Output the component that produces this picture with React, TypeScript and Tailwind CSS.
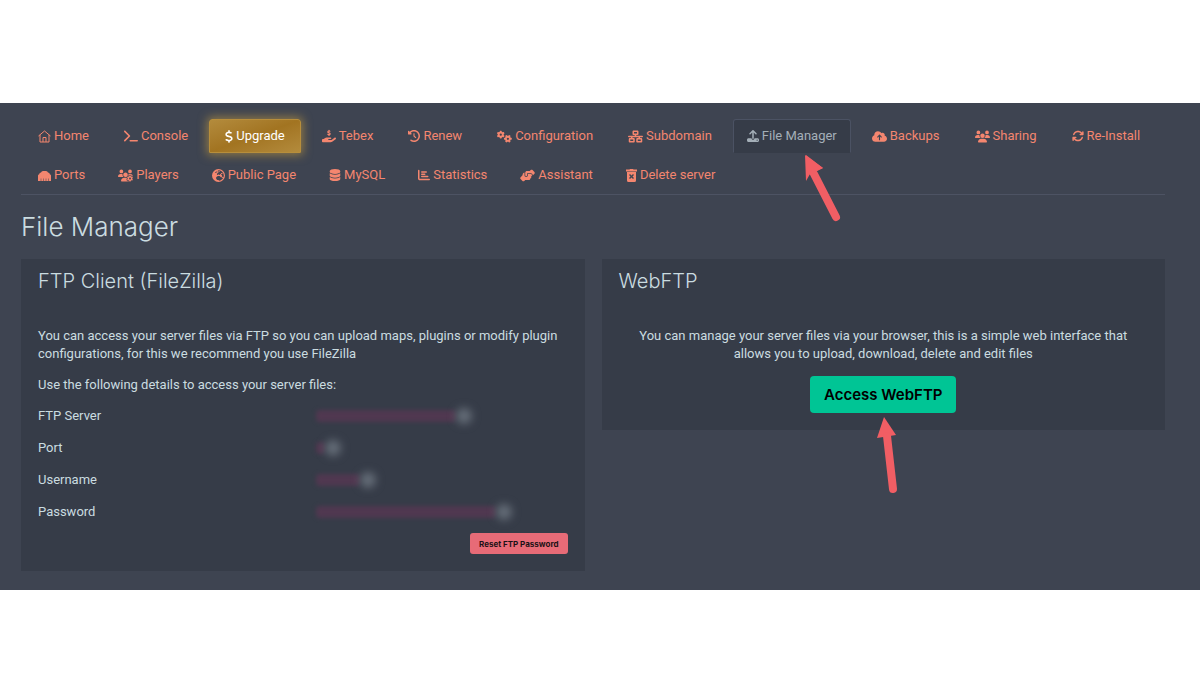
import type { ReactNode } from "react";
import {
  FaTerminal, FaDollarSign, FaHandHoldingDollar, FaClockRotateLeft, FaGears, FaNetworkWired,
  FaUpload, FaCloudArrowUp, FaUsers, FaArrowsRotate, FaUsersGear, FaEarthEurope,
  FaDatabase, FaChartBar, FaHandshakeAngle,
} from "react-icons/fa6";

function HomeIcon() {
  return (
    <svg viewBox="0 0 26 26" width="13" height="13" fill="none" stroke="currentColor" strokeWidth="2" strokeLinejoin="round" aria-hidden="true">
      <path d="M1 12 13 2l12 10M4 10v14h18V10M10 24v-9h6v9" />
    </svg>
  );
}

function PortsIcon() {
  return (
    <svg viewBox="0 0 26 22" width="13" height="11" fill="currentColor" aria-hidden="true">
      <path d="M0 22V11q0-2 2-2 1-4 4-4 1-3 4-3h6q3 0 4 3 3 0 4 4 2 0 2 2v11z" />
      <path d="M6 17v5M11 17v5M16 17v5M21 17v5" stroke="#3e4451" strokeWidth="1" />
    </svg>
  );
}

function TrashIcon() {
  return (
    <svg viewBox="0 0 22 26" width="11" height="13" fill="currentColor" aria-hidden="true">
      <path fillRule="evenodd" d="M0 1h7l1-1h6l1 1h7v4H0zM2 6h18v17q0 3-3 3H5q-3 0-3-3zM6 12l3 3-3 3 2 2 3-3 3 3 2-2-3-3 3-3-2-2-3 3-3-3z" />
    </svg>
  );
}

type Tab = { label: string; icon: ReactNode; kind?: "upgrade" | "active" };

const serverTabs: Tab[] = [
  { label: "Home", icon: <HomeIcon /> },
  { label: "Console", icon: <FaTerminal size={14} /> },
  { label: "Upgrade", icon: <FaDollarSign size={13} className="w-2" />, kind: "upgrade" },
  { label: "Tebex", icon: <FaHandHoldingDollar size={14} /> },
  { label: "Renew", icon: <FaClockRotateLeft size={12} /> },
  { label: "Configuration", icon: <FaGears size={15} /> },
  { label: "Subdomain", icon: <FaNetworkWired size={15} /> },
  { label: "File Manager", icon: <FaUpload size={12} />, kind: "active" },
  { label: "Backups", icon: <FaCloudArrowUp size={15} /> },
  { label: "Sharing", icon: <FaUsers size={15} /> },
  { label: "Re-Install", icon: <FaArrowsRotate size={12} /> },
];

const extraTabs: Tab[] = [
  { label: "Ports", icon: <PortsIcon /> },
  { label: "Players", icon: <FaUsersGear size={15} /> },
  { label: "Public Page", icon: <FaEarthEurope size={13} /> },
  { label: "MySQL", icon: <FaDatabase size={12} /> },
  { label: "Statistics", icon: <FaChartBar size={12} /> },
  { label: "Assistant", icon: <FaHandshakeAngle size={15} /> },
  { label: "Delete server", icon: <TrashIcon /> },
];

const tabStyle = {
  plain: "px-[13px] border-transparent text-[#f4866f]",
  upgrade:
    "px-[15px] border-[#b78e3b] bg-linear-to-br from-[#b38b3c] via-[#a27421] to-[#b38b3c] text-white shadow-[0_0_10px_2px_rgba(214,165,60,0.55)]",
  active: "px-[13px] border-[#4b5263] border-b-[#363c48] bg-[#363c48] text-[#a4afb8]",
};

function TabRow({ tabs, gap }: { tabs: Tab[]; gap: string }) {
  return (
    <div className={`flex flex-wrap px-[3px] ${gap}`}>
      {tabs.map((t) => (
        <a
          key={t.label}
          href="#"
          className={`flex h-[34px] items-center gap-[3px] rounded-t-[3px] border whitespace-nowrap ${tabStyle[t.kind ?? "plain"]}`}
        >
          {t.icon}
          {t.label}
        </a>
      ))}
    </div>
  );
}

const details = [
  { label: "FTP Server", width: "w-[140px]" },
  { label: "Port", width: "w-[9px]" },
  { label: "Username", width: "w-[44px]" },
  { label: "Password", width: "w-[180px]" },
];

export default function App() {
  return (
    <div className="min-h-screen bg-white py-[103px] font-['Roboto',sans-serif]">
      <main className="bg-[#3e4451] pt-4 pr-[35px] pb-[19px] pl-[21px] text-[13px] leading-[18px] text-[#cbdce0]">
        <nav className="flex flex-col gap-[5px] border-b border-[#4d5363] pb-[2px]">
          <TabRow tabs={serverTabs} gap="gap-x-[7px]" />
          <TabRow tabs={extraTabs} gap="gap-x-[5px]" />
        </nav>

        <h1 className="mt-4 mb-4 font-['Inter',sans-serif] text-[26px] leading-8 font-light">File Manager</h1>

        <div className="grid grid-cols-2 items-start gap-[17px]">
          <section className="bg-[#363c48] px-[17px] pt-[9px] pb-[17px]">
            <h2 className="mb-[33px] font-['Inter',sans-serif] text-[20px] leading-[26px] font-light">FTP Client (FileZilla)</h2>
            <p className="mb-[13px]">
              You can access your server files via FTP so you can upload maps, plugins or modify plugin
              configurations, for this we recommend you use FileZilla
            </p>
            <p className="mb-[13px]">Use the following details to access your server files:</p>
            <dl className="flex flex-col gap-[14px]">
              {details.map((d) => (
                <div key={d.label} className="grid grid-cols-[278px_1fr]">
                  <dt>{d.label}</dt>
                  <dd className="flex items-center">
                    <span className={`h-3 rounded bg-[#503850] blur-[2px] ${d.width}`} />
                    <span className="size-4 rounded-full bg-[#646c77] blur-[4px]" />
                  </dd>
                </div>
              ))}
            </dl>
            <div className="mt-3 flex justify-end">
              <button type="button" className="h-[21px] rounded-[3px] bg-[#e76b77] px-[9px] font-['Inter',sans-serif] text-[8px] font-bold text-[#1c1216]">
                Reset FTP Password
              </button>
            </div>
          </section>

          <section className="bg-[#363c48] px-[17px] pt-[9px] pb-[17px]">
            <h2 className="mb-[33px] font-['Inter',sans-serif] text-[20px] leading-[26px] font-light">WebFTP</h2>
            <p className="mb-[13px] px-3 text-center">
              You can manage your server files via your browser, this is a simple web interface that
              allows you to upload, download, delete and edit files
            </p>
            <div className="flex justify-center">
              <button type="button" className="h-[37px] rounded bg-[#00c595] px-[14px] font-['Inter',sans-serif] text-[15px] font-semibold text-black">
                Access WebFTP
              </button>
            </div>
          </section>
        </div>
      </main>

      <svg className="pointer-events-none absolute top-[154px] left-[804px]" width="38" height="69" viewBox="0 0 38 69" fill="#f15e64" aria-hidden="true">
        <path d="M1 1 19 14 13 17 6 20 2 27z" />
        <path d="M2 1 19 14 2 22z" />
        <path d="M10 20 32 63" stroke="#f15e64" strokeWidth="8" strokeLinecap="round" />
      </svg>
      <svg className="pointer-events-none absolute top-[417px] left-[876px]" width="23" height="78" viewBox="0 0 23 78" fill="#f15e64" aria-hidden="true">
        <path d="M8 0 20 18 1 21z" />
        <path d="M11 19 17 72" stroke="#f15e64" strokeWidth="8" strokeLinecap="round" />
      </svg>
    </div>
  );
}
